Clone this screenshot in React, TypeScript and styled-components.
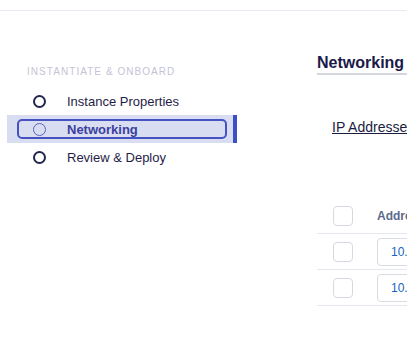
import React from 'react'
import styled, { createGlobalStyle } from 'styled-components'

const steps = [
  { label: 'Instance Properties', active: false },
  { label: 'Networking', active: true },
  { label: 'Review & Deploy', active: false },
]

const rows = ['10.0.0.4', '10.0.0.5']

const App = () => {
  return (
    <>
      <GlobalStyle />
      <TopBar />
      <Main>
        <Sidebar>
          <SectionLabel>Instantiate &amp; Onboard</SectionLabel>
          {steps.map((s) => (
            <NavItem key={s.label} $active={s.active}>
              <FocusRing $active={s.active}>
                <StepCircle $active={s.active} />
                <StepText $active={s.active}>{s.label}</StepText>
              </FocusRing>
            </NavItem>
          ))}
        </Sidebar>
        <Content>
          <Heading>Networking</Heading>
          <TabLink>IP Addresses</TabLink>
          <Table>
            <HeadRow>
              <Checkbox />
              <HeadCell>Address</HeadCell>
            </HeadRow>
            {rows.map((r) => (
              <Row key={r}>
                <Checkbox />
                <AddressInput>{r}</AddressInput>
              </Row>
            ))}
          </Table>
        </Content>
      </Main>
    </>
  )
}

export default App

const GlobalStyle = createGlobalStyle`
body {
  margin: 0;
  background: #ffffff;
  font-family: "Liberation Sans", Arial, sans-serif;
  overflow: hidden;
}
`
const TopBar = styled.div`
height: 10px;
border-bottom: 1px solid #e8e7f3;
`
const Main = styled.div`
display: flex;
width: 1000px;
`
const Sidebar = styled.div`
width: 237px;
flex-shrink: 0;
padding-top: 55px;
`
const SectionLabel = styled.div`
margin-left: 27px;
font-size: 10px;
line-height: 12px;
letter-spacing: 1.05px;
text-transform: uppercase;
color: #c6c2d7;
margin-bottom: 9px;
`
const NavItem = styled.div<{ $active: boolean }>`
box-sizing: border-box;
width: 230px;
margin-left: 7px;
height: 28px;
display: flex;
align-items: center;
padding: 0 6px 0 10px;
background: ${(p) => (p.$active ? '#d9ddf1' : 'transparent')};
border-right: 4px solid ${(p) => (p.$active ? '#3d4fc7' : 'transparent')};
`
const FocusRing = styled.div<{ $active: boolean }>`
box-sizing: border-box;
flex: 1;
height: 20px;
display: flex;
align-items: center;
padding-left: 14px;
border: 2px solid ${(p) => (p.$active ? '#4652c2' : 'transparent')};
border-radius: 5px;
`
const StepCircle = styled.span<{ $active: boolean }>`
box-sizing: border-box;
width: 13px;
height: 13px;
border-radius: 50%;
border: ${(p) => (p.$active ? '1.5px solid #5a64bb' : '2px solid #22264f')};
flex-shrink: 0;
`
const StepText = styled.span<{ $active: boolean }>`
margin-left: 21px;
font-size: 13px;
font-weight: ${(p) => (p.$active ? 700 : 400)};
color: ${(p) => (p.$active ? '#3b40a0' : '#1f1d48')};
`
const Content = styled.div`
margin-left: 80px;
width: 600px;
padding-top: 43px;
`
const Heading = styled.div`
font-size: 16px;
line-height: 18px;
font-weight: 700;
color: #1b1a4a;
padding-bottom: 1px;
border-bottom: 2px solid #d5d7e0;
`
const TabLink = styled.div`
margin: 44px 0 0 15px;
font-size: 14px;
line-height: 16px;
color: #1a1d3d;
text-decoration: underline;
`
const Table = styled.div`
margin-top: 63px;
`
const HeadRow = styled.div`
display: flex;
align-items: center;
height: 36px;
box-sizing: border-box;
border-bottom: 1px solid #e5e7ee;
padding-left: 16px;
`
const Row = styled(HeadRow)``
const Checkbox = styled.span`
box-sizing: border-box;
width: 20px;
height: 20px;
border: 1.5px solid #d6d9e3;
border-radius: 4px;
flex-shrink: 0;
margin-right: 24px;
`
const HeadCell = styled.span`
font-size: 12px;
font-weight: 700;
color: #5b6a8c;
`
const AddressInput = styled.div`
box-sizing: border-box;
width: 180px;
height: 28px;
display: flex;
align-items: center;
padding-left: 13px;
border: 1px solid #d9dce5;
border-radius: 4px;
font-size: 12px;
color: #1464c0;
`
